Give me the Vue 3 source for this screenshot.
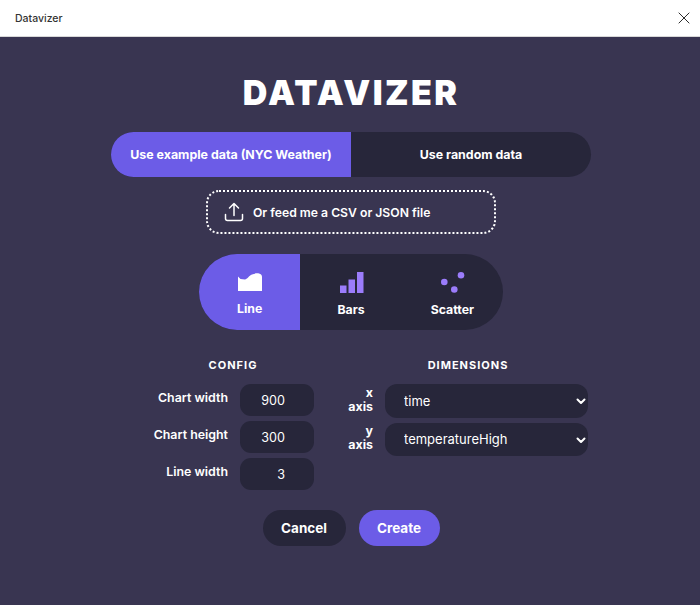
<template>
  <div class="win">
    <header class="topbar">
      <span class="topbar-title">Datavizer</span>
      <button class="close" aria-label="Close">
        <svg width="12" height="12" viewBox="0 0 12 12"><path d="M.7.7l10.6 10.6M11.3.7L.7 11.300" stroke="#2b2b2b" stroke-width="1" fill="none" /></svg>
      </button>
    </header>

    <main class="main">
      <h1 class="logo">DATAVIZER</h1>

      <div class="source">
        <button class="source-btn active">Use example data (NYC Weather)</button>
        <button class="source-btn">Use random data</button>
      </div>

      <button class="upload">
        <svg width="20" height="20" viewBox="0 0 20 20" fill="none" stroke="#fff" stroke-width="1.500" stroke-linecap="round" stroke-linejoin="round">
          <path d="M1.500 12.500v4a2 2 0 0 0 2 2h13a2 2 0 0 0 2-2v-4" />
          <path d="M10 13.500V1.500M5.500 6 10 1.500 14.500 6" />
        </svg>
        Or feed me a CSV or JSON file
      </button>

      <div class="types">
        <button class="type active">
          <svg width="24" height="18" viewBox="0 0 24 18"><path d="M0 3.500 2.500 6 7 6.500C9 6.500 11 2.500 14 1.500 16 .5 19.500 0 21 .5 23 1 24 2 24 4V18H0Z" fill="#fff" /></svg>
          <span class="type-name">Line</span>
        </button>
        <button class="type">
          <svg class="type-icon" width="24" height="21" viewBox="0 0 24 21" fill="#9b7cfb"><rect x="0" y="13.500" width="6.500" height="7.500" /><rect x="8.500" y="7.500" width="6.500" height="13.500" /><rect x="17" y="0" width="6.500" height="21" /></svg>
          <span class="type-name">Bars</span>
        </button>
        <button class="type">
          <svg class="type-icon" width="24" height="21" viewBox="0 0 24 21" fill="#9b7cfb"><circle cx="3.300" cy="10" r="3.300" /><circle cx="13.300" cy="17.500" r="3.300" /><circle cx="20" cy="3.300" r="3.300" /></svg>
          <span class="type-name">Scatter</span>
        </button>
      </div>

      <div class="form">
        <section class="config">
          <h2 class="form-title">CONFIG</h2>
          <label v-for="f in config" :key="f.label" class="config-row">
            <span class="config-label">{{ f.label }}</span>
            <input class="num" :value="f.value" />
          </label>
        </section>

        <section class="dims">
          <h2 class="form-title">DIMENSIONS</h2>
          <label v-for="d in dims" :key="d.axis" class="dim-row">
            <span class="dim-label">{{ d.axis }} axis</span>
            <span class="select-wrap">
              <select class="dim-select">
                <option>{{ d.value }}</option>
              </select>
              <svg class="chevron" width="10" height="7" viewBox="0 0 10 7" fill="none" stroke="#fff" stroke-width="2" stroke-linecap="round" stroke-linejoin="round"><path d="M1.500 1.500 5 5l3.500-3.500" /></svg>
            </span>
          </label>
        </section>
      </div>

      <div class="actions">
        <button class="action">Cancel</button>
        <button class="action primary">Create</button>
      </div>
    </main>
  </div>
</template>

<script setup>
const config = [
  { label: 'Chart width', value: '900' },
  { label: 'Chart height', value: '300' },
  { label: 'Line width', value: '3' },
]

const dims = [
  { axis: 'x', value: 'time' },
  { axis: 'y', value: 'temperatureHigh' },
]
</script>

<style>
html, body { margin: 0; background: #393551; }
</style>

<style scoped>
.win {
  width: 700px;
  height: 605px;
  overflow: hidden;
  display: flex;
  flex-direction: column;
  font-family: Inter, "Noto Sans", sans-serif;
  color: #fff;
  background: #393551;
}

button { font-family: inherit; color: inherit; border: 0; padding: 0; background: none; }

.topbar {
  height: 37px;
  flex: none;
  box-sizing: border-box;
  padding: 0 10px 0 15px;
  display: flex;
  align-items: center;
  justify-content: space-between;
  background: #fff;
  border-bottom: 1px solid #d8d8d8;
}
.topbar-title { font-size: 10.500px; font-weight: 500; color: #333; }
.close { display: flex; }

.main {
  flex: 1;
  display: flex;
  flex-direction: column;
  align-items: center;
  padding-left: 2px;
}

.logo {
  margin: 36px 0 0;
  height: 39px;
  font-size: 34px;
  line-height: 39px;
  font-weight: 900;
  letter-spacing: 2.400px;
}

.source {
  margin-top: 20px;
  width: 480px;
  height: 45px;
  display: flex;
  border-radius: 23px;
  overflow: hidden;
  background: #27263a;
}
.source-btn { flex: 1; font-size: 12.400px; font-weight: 700; }
.source-btn.active { background: #6c5ce7; }

.upload {
  margin-top: 13px;
  width: 290px;
  height: 44px;
  box-sizing: border-box;
  padding-left: 16px;
  display: flex;
  align-items: center;
  gap: 9px;
  border: 2px dotted #fff;
  border-radius: 13px;
  font-size: 12.200px;
  font-weight: 600;
}

.types {
  margin-top: 20px;
  width: 304px;
  height: 76px;
  display: flex;
  border-radius: 38px;
  overflow: hidden;
  background: #27263a;
}
.type {
  flex: 1;
  box-sizing: border-box;
  padding-top: 4px;
  display: flex;
  flex-direction: column;
  align-items: center;
  justify-content: center;
  gap: 9px;
}
.type.active { background: #6c5ce7; gap: 10px; }
.type-icon { margin-left: 2px; }
.type-name { font-size: 12.300px; font-weight: 700; }

.form {
  margin-top: 28px;
  width: 480px;
  display: flex;
  justify-content: space-between;
}
.form-title {
  margin: 0 0 12px;
  height: 14px;
  font-size: 11px;
  line-height: 14px;
  font-weight: 700;
  letter-spacing: 1px;
  text-align: center;
}

.config { width: 176px; margin-left: 27px; }
.config .form-title { padding-left: 14px; }
.config-row {
  display: flex;
  align-items: center;
  justify-content: flex-end;
  gap: 12px;
  margin-bottom: 5px;
}
.config-label { font-size: 12.400px; font-weight: 600; margin-top: -6px; white-space: nowrap; }
.num {
  width: 74px;
  height: 32px;
  box-sizing: border-box;
  padding: 0 29px 0 0;
  border: 0;
  outline: 0;
  border-radius: 11px;
  background: #27263a;
  color: #fff;
  font-family: inherit;
  font-size: 12.600px;
  text-align: right;
}

.dims { width: 242px; margin-right: 3px; }
.dims .form-title { padding-left: 2px; }
.dim-row {
  display: flex;
  align-items: center;
  gap: 12px;
  margin-bottom: 5px;
}
.dim-label {
  width: 27px;
  flex: none;
  margin-top: -2px;
  font-size: 12.400px;
  line-height: 14px;
  font-weight: 700;
  text-align: right;
}
.select-wrap { position: relative; flex: 1; display: flex; }
.dim-select {
  appearance: none;
  width: 100%;
  height: 33.500px;
  border: 0;
  outline: 0;
  padding: 0 20px 0 19px;
  border-radius: 12px;
  background: #27263a;
  color: #fff;
  font-family: inherit;
  font-size: 13px;
}
.chevron { position: absolute; right: 2px; top: 14px; pointer-events: none; }

.actions {
  margin-top: 15px;
  display: flex;
  gap: 13px;
}
.action {
  height: 36px;
  width: 83px;
  border-radius: 18px;
  background: #27263a;
  font-size: 13.500px;
  font-weight: 700;
}
.action.primary { width: 81px; background: #6c5ce7; }
</style>
